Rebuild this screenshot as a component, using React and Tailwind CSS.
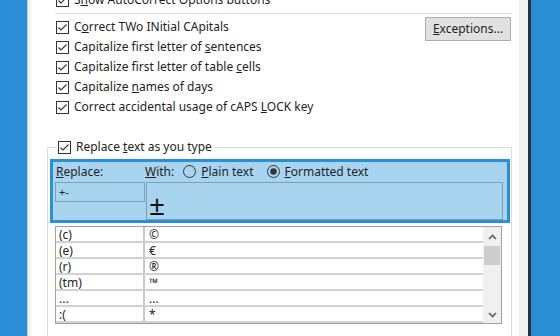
import React from "react";

function Check() {
  return (
    <svg width="13" height="13" viewBox="0 0 13 13" className="shrink-0">
      <rect x="0.5" y="0.5" width="12" height="12" fill="#fff" stroke="#333" />
      <path d="M2.5 6.5 L5 9 L10.5 3.5" fill="none" stroke="#333" strokeWidth="1.1" />
    </svg>
  );
}

function Radio({ on }) {
  return (
    <svg width="13" height="13" viewBox="0 0 13 13" className="shrink-0">
      <circle cx="6.5" cy="6.5" r="6" fill="none" stroke="#333" />
      {on && <circle cx="6.5" cy="6.5" r="3.2" fill="#333" />}
    </svg>
  );
}

function Chevron({ up }) {
  return (
    <svg width="9" height="6" viewBox="0 0 9 6">
      <path
        d={up ? "M1 5 L4.5 1.5 L8 5" : "M1 1 L4.5 4.5 L8 1"}
        fill="none"
        stroke="#606060"
        strokeWidth="1.6"
      />
    </svg>
  );
}

function Row({ children }) {
  return (
    <div className="flex items-center h-[20px] gap-[5px]">
      <Check />
      <span className="whitespace-nowrap">{children}</span>
    </div>
  );
}

const entries = [
  ["(c)", "©"],
  ["(e)", "€"],
  ["(r)", "®"],
  ["(tm)", "™"],
  ["...", "..."],
  [":(", "*"],
];

export default function App() {
  return (
    <div className="w-[560px] h-[336px] overflow-hidden flex bg-white font-['Noto_Sans',sans-serif] text-[12px] text-[#1e1e1e]">
      <div className="w-[27px] shrink-0 bg-[#2a8dd5]" />
      <div className="w-[1px] shrink-0 bg-[#c5ced6]" />
      <div className="w-[3px] shrink-0 bg-[#f0f0f0]" />

      {/* dialog page */}
      <div className="w-[488px] shrink-0 bg-white pl-[16px] pr-[7px]">
        <div className="-mt-[10px] pl-[9px]">
          <Row>
            S<u>h</u>ow AutoCorrect Options buttons
          </Row>
        </div>
        <div className="mt-[3px] ml-[8px] h-[1px] bg-[#dcdcdc]" />

        <div className="mt-[3px] flex justify-between">
          <div className="pl-[9px]">
            <Row>
              C<u>o</u>rrect TWo INitial CApitals
            </Row>
            <Row>
              Capitalize first letter of <u>s</u>entences
            </Row>
            <Row>
              Capitalize first letter of table <u>c</u>ells
            </Row>
            <Row>
              Capitalize <u>n</u>ames of days
            </Row>
            <Row>
              Correct accidental usage of cAPS <u>L</u>OCK key
            </Row>
          </div>
          <button className="mt-0 mr-[1px] w-[86px] h-[24px] border border-[#adadad] bg-[#e1e1e1] text-[12px] text-[#1e1e1e]">
            <u>E</u>xceptions...
          </button>
        </div>

        <fieldset className="mt-[20px] border border-[#dcdcdc] pl-[2px] pr-[1px] h-[220px]">
          <legend className="ml-[6px] px-[2px]">
            <Row>
              Replace <u>t</u>ext as you type
            </Row>
          </legend>

          <div className="mt-[2px] border-[3px] border-[#2b8fd6] bg-[#a9d4ef]">
            <div className="flex items-center h-[19px] pl-[2px]">
              <span className="w-[90px] pl-[1px]">
                <u>R</u>eplace:
              </span>
              <span>
                <u>W</u>ith:
              </span>
              <span className="ml-[9px] flex items-center gap-[5px]">
                <Radio />
                <span>
                  <u>P</u>lain text
                </span>
              </span>
              <span className="ml-[13px] flex items-center gap-[5px]">
                <Radio on />
                <span>
                  <u>F</u>ormatted text
                </span>
              </span>
            </div>
            <div className="mt-[1px] flex items-start pl-[2px] pr-[4px]">
              <div className="w-[90px] h-[20px] border border-[#7d9fba] flex items-center pl-[3px] text-[11px]">
                +-
              </div>
              <div className="ml-[1px] flex-1 h-[38px] border border-[#7d9fba] pl-[2px] pt-[7px] text-[28px] leading-none text-[#111]">
                ±
              </div>
            </div>
          </div>

          <div className="mt-[3px] ml-[5px] w-[447px] border border-[#a0a0a0] flex">
            <div className="flex-1">
              {entries.map(([a, b]) => (
                <div key={a} className="flex h-[16px] border-b-2 border-[#d2d2d2]">
                  <div className="w-[89px] border-r-2 border-[#c8c8c8] pl-[3px] leading-[15px]">{a}</div>
                  <div className="flex-1 pl-[4px] leading-[15px]">{b}</div>
                </div>
              ))}
            </div>
            <div className="w-[18px] bg-[#f0f0f0] flex flex-col">
              <div className="h-[18px] flex items-center justify-center pt-[2px]">
                <Chevron up />
              </div>
              <div className="mt-[1px] mx-[1px] h-[19px] bg-[#cdcdcd]" />
              <div className="flex-1" />
              <div className="h-[17px] flex items-center justify-center">
                <Chevron />
              </div>
            </div>
          </div>
        </fieldset>
      </div>

      <div className="w-[9px] shrink-0 bg-[#f0f0f0]" />
      <div className="w-[3px] shrink-0 bg-[#263442]" />
      <div className="flex-1 bg-[#2a8dd5]" />
    </div>
  );
}
